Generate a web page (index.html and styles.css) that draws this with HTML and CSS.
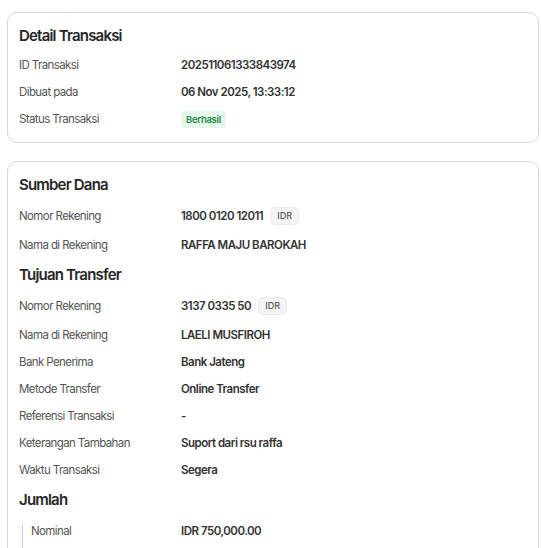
FILE: index.html
```html
<!DOCTYPE html>
<html lang="id">
<head>
<meta charset="utf-8">
<title>Detail Transaksi</title>
<link rel="stylesheet" href="styles.css">
</head>
<body>
<main class="page">
  <section class="card">
    <h2 class="heading">Detail Transaksi</h2>
    <div class="row"><span class="label">ID Transaksi</span><span class="value">202511061333843974</span></div>
    <div class="row"><span class="label">Dibuat pada</span><span class="value">06 Nov 2025, 13:33:12</span></div>
    <div class="row"><span class="label">Status Transaksi</span><span class="value"><span class="status">Berhasil</span></span></div>
  </section>

  <section class="card card-open">
    <h2 class="heading">Sumber Dana</h2>
    <div class="row row-badge"><span class="label">Nomor Rekening</span><span class="value">1800 0120 12011 <span class="cur">IDR</span></span></div>
    <div class="row"><span class="label">Nama di Rekening</span><span class="value">RAFFA MAJU BAROKAH</span></div>

    <h2 class="heading heading-sub">Tujuan Transfer</h2>
    <div class="row row-badge"><span class="label">Nomor Rekening</span><span class="value">3137 0335 50 <span class="cur">IDR</span></span></div>
    <div class="row"><span class="label">Nama di Rekening</span><span class="value">LAELI MUSFIROH</span></div>
    <div class="row"><span class="label">Bank Penerima</span><span class="value">Bank Jateng</span></div>
    <div class="row"><span class="label">Metode Transfer</span><span class="value">Online Transfer</span></div>
    <div class="row"><span class="label">Referensi Transaksi</span><span class="value">-</span></div>
    <div class="row"><span class="label">Keterangan Tambahan</span><span class="value">Suport dari rsu raffa</span></div>
    <div class="row"><span class="label">Waktu Transaksi</span><span class="value">Segera</span></div>

    <h2 class="heading heading-sub">Jumlah</h2>
    <div class="group">
      <div class="row"><span class="label">Nominal</span><span class="value">IDR 750,000.00</span></div>
    </div>
  </section>
</main>
</body>
</html>
```
FILE: styles.css
```css
html, body {
  margin: 0;
  padding: 0;
  background: #ffffff;
}
body {
  font-family: Inter, "Noto Sans", sans-serif;
  color: #333333;
  height: 548px;
  overflow: hidden;
}
.page {
  display: flex;
  flex-direction: column;
  gap: 18px;
  width: 532px;
  margin: 12px 0 0 7px;
}
.card {
  border: 1px solid #d6d6d6;
  border-radius: 10px;
  padding: 13px 12px 13px 11px;
  display: flex;
  flex-direction: column;
  gap: 7px;
}
.heading {
  margin: 0 0 2px;
  font-size: 15px;
  line-height: 20px;
  font-weight: 600;
  letter-spacing: -0.8px;
  color: #262626;
}
.card-open .heading {
  margin-bottom: 1px;
}
.card-open .heading-sub {
  margin-top: 3px;
}
.row {
  display: flex;
  align-items: center;
  min-height: 20px;
  font-size: 11.5px;
  line-height: 20px;
}
.row-badge {
  min-height: 25px;
}
.label {
  width: 162px;
  flex: none;
  color: #555555;
  letter-spacing: -0.6px;
}
.value {
  font-weight: 600;
  color: #333333;
  letter-spacing: -0.5px;
  display: flex;
  align-items: center;
  gap: 7px;
}
.status {
  display: inline-block;
  font-size: 9.5px;
  line-height: 17px;
  padding: 0 5px;
  border-radius: 4px;
  background: #e8f7ec;
  color: #1e8a45;
  font-weight: 600;
  letter-spacing: -0.3px;
}
.cur {
  display: inline-block;
  font-size: 9px;
  line-height: 16px;
  padding: 0 6px;
  border: 1px solid #ebebeb;
  border-radius: 5px;
  background: #f4f4f4;
  color: #555555;
  font-weight: 500;
  letter-spacing: 0;
}
.group {
  border-left: 1px solid #cfcfcf;
  margin-left: 3px;
  margin-top: 7px;
  padding-left: 8px;
  padding-bottom: 20px;
  display: flex;
  flex-direction: column;
  gap: 7px;
}
.group .row {
  min-height: 12px;
  line-height: 12px;
}
.group .label {
  width: 150px;
}
```
